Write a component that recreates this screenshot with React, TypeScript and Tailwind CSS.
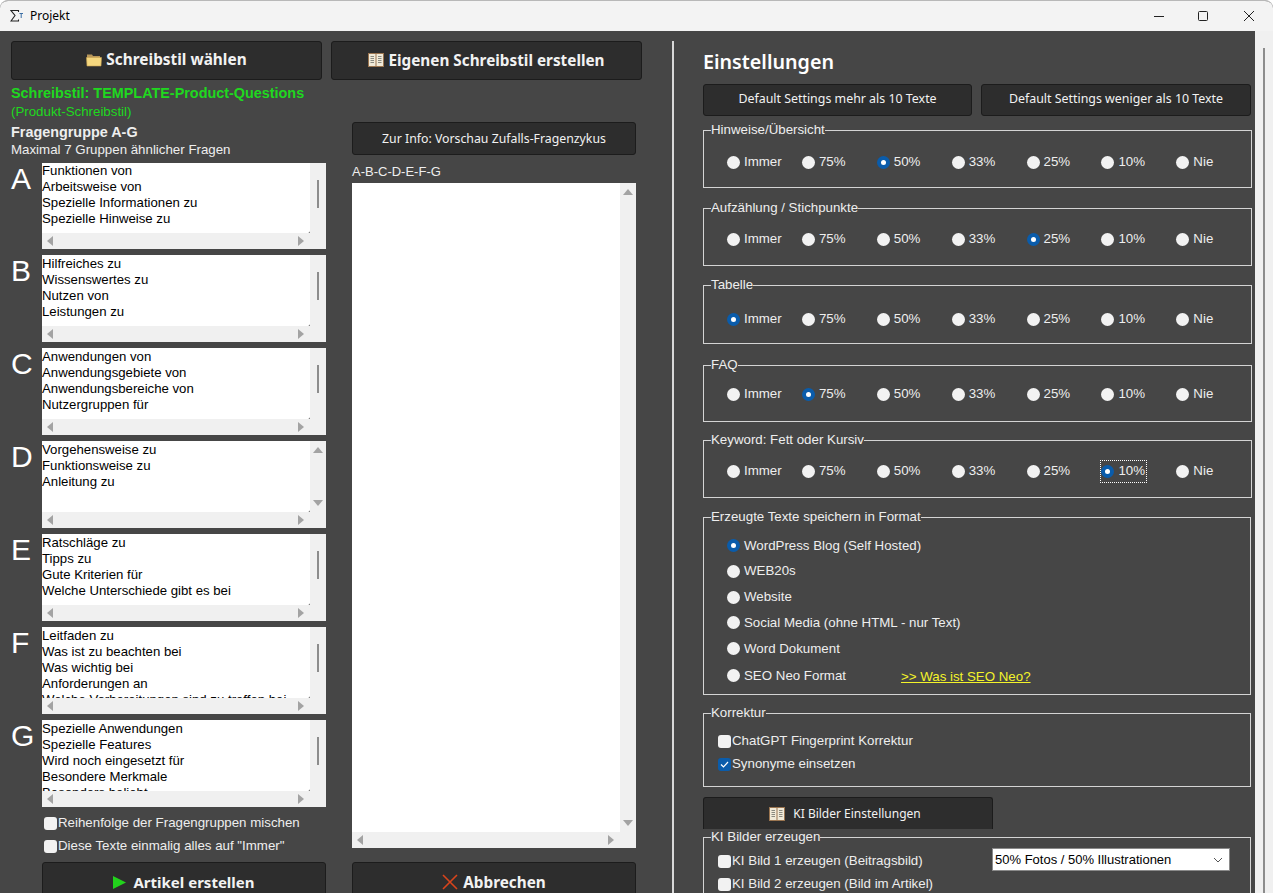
import type { ReactNode } from 'react';

const groups = [
  { letter: 'A', lines: ['Funktionen von', 'Arbeitsweise von', 'Spezielle Informationen zu', 'Spezielle Hinweise zu'], thumb: true, box: 'h-[86px]', text: 'pt-0' },
  { letter: 'B', lines: ['Hilfreiches zu', 'Wissenswertes zu', 'Nutzen von', 'Leistungen zu'], thumb: true, box: 'h-[87px]', text: 'pt-px' },
  { letter: 'C', lines: ['Anwendungen von', 'Anwendungsgebiete von', 'Anwendungsbereiche von', 'Nutzergruppen für'], thumb: true, box: 'h-[87px]', text: 'pt-px' },
  { letter: 'D', lines: ['Vorgehensweise zu', 'Funktionsweise zu', 'Anleitung zu'], thumb: false, box: 'h-[87px]', text: 'pt-px' },
  { letter: 'E', lines: ['Ratschläge zu', 'Tipps zu', 'Gute Kriterien für', 'Welche Unterschiede gibt es bei'], thumb: true, box: 'h-[87px]', text: 'pt-px' },
  { letter: 'F', lines: ['Leitfaden zu', 'Was ist zu beachten bei', 'Was wichtig bei', 'Anforderungen an', 'Welche Vorbereitungen sind zu treffen bei'], thumb: true, box: 'h-[87px]', text: 'pt-px' },
  { letter: 'G', lines: ['Spezielle Anwendungen', 'Spezielle Features', 'Wird noch eingesetzt für', 'Besondere Merkmale', 'Besonders beliebt'], thumb: true, box: 'h-[87px]', text: 'pt-px' },
];

const percents = ['Immer', '75%', '50%', '33%', '25%', '10%', 'Nie'];

const radioGroups = [
  { title: 'Hinweise/Übersicht', active: '50%', box: 'mt-[6px] h-[66px]', row: 'pt-[16px]' },
  { title: 'Aufzählung / Stichpunkte', active: '25%', box: 'mt-[12px] h-[66px]', row: 'pt-[15px]' },
  { title: 'Tabelle', active: 'Immer', box: 'mt-[11px] h-[67px]', row: 'pt-[18px]' },
  { title: 'FAQ', active: '75%', box: 'mt-[13px] h-[65px]', row: 'pt-[13px]' },
  { title: 'Keyword: Fett oder Kursiv', active: '10%', box: 'mt-[10px] h-[66px]', row: 'pt-[15px]' },
];

const formats = ['WordPress Blog (Self Hosted)', 'WEB20s', 'Website', 'Social Media (ohne HTML - nur Text)', 'Word Dokument', 'SEO Neo Format'];

function FolderIcon() {
  return (
    <svg width="16" height="14" viewBox="0 0 16 14">
      <path d="M1 3 L1 1.5 L6 1.5 L7 3 L14 3 L14 5 L1 5 Z" fill="#b8975a" />
      <path d="M0.5 4.5 L15.5 4.5 L15 13 L1 13 Z" fill="#f5d77e" stroke="#c9a350" strokeWidth="0.6" />
    </svg>
  );
}

function BookIcon() {
  return (
    <svg width="16" height="14" viewBox="0 0 16 14">
      <rect x="0.5" y="0.5" width="15" height="13" fill="#f1ead8" stroke="#9a7550" />
      <path d="M8 1 V13" stroke="#9a7550" />
      <path d="M2.5 3.5 H6 M2.5 5.5 H6 M2.5 7.5 H6 M2.5 9.5 H6 M10 3.5 H13.5 M10 5.5 H13.5 M10 7.5 H13.5 M10 9.5 H13.5" stroke="#8a8a80" />
    </svg>
  );
}

function SigmaIcon() {
  return (
    <svg width="14" height="14" viewBox="0 0 14 14" fill="none" stroke="#222">
      <path d="M8.5 3 V1.5 H1 L5 6.5 L1 12 H8.5 V10.5" strokeWidth="1.1" />
      <path d="M9.5 4.5 H13 M11.2 4.5 V9" stroke="#3a6ea5" strokeWidth="1" />
    </svg>
  );
}

function DarkButton({ children, className }: { children: ReactNode; className: string }) {
  return (
    <button className={`flex items-center justify-center rounded-[3px] border border-[#1c1c1c] bg-[#2d2d2d] text-[#f2f2f2] font-['Noto_Sans',sans-serif] ${className}`}>
      {children}
    </button>
  );
}

function Arrow({ dir }: { dir: 'up' | 'down' | 'left' | 'right' }) {
  const points = {
    up: '0,8 5,2 10,8',
    down: '0,2 5,8 10,2',
    left: '8,0 2,5 8,10',
    right: '2,0 8,5 2,10',
  }[dir];
  return (
    <svg width="10" height="10" viewBox="0 0 10 10">
      <polygon points={points} fill="#a3a3a3" />
    </svg>
  );
}

function HBar() {
  return (
    <div className="flex h-4 shrink-0 items-center justify-between bg-[#f0f0f0] pl-[3px] pr-[20px]">
      <Arrow dir="left" />
      <Arrow dir="right" />
    </div>
  );
}

function ListGroup({ letter, lines, thumb, box, text }: { letter: string; lines: string[]; thumb: boolean; box: string; text: string }) {
  return (
    <div className={`flex ${box}`}>
      <div className="w-[31px] text-[30px] leading-[32px] text-white">{letter}</div>
      <div className="flex w-[284px] flex-col">
        <div className="flex min-h-0 flex-1">
          <div className={`w-[268px] overflow-hidden rounded-br-[2px] bg-white text-[13.2px] leading-[16px] text-black whitespace-nowrap ${text}`}>
            {lines.map((line) => (
              <div key={line}>{line}</div>
            ))}
          </div>
          {thumb ? (
            <div className="w-4 bg-[#f0f0f0] pl-[7px] pt-[17px]">
              <div className="h-[28px] w-[2px] bg-[#8c8c8c]" />
            </div>
          ) : (
            <div className="flex w-4 flex-col items-center justify-between bg-[#f0f0f0] py-[4px]">
              <Arrow dir="up" />
              <Arrow dir="down" />
            </div>
          )}
        </div>
        <HBar />
      </div>
    </div>
  );
}

function Check({ label, checked }: { label: string; checked?: boolean }) {
  return (
    <div className="flex items-center">
      {checked ? (
        <span className="flex h-[13px] w-[13px] items-center justify-center rounded-[3px] bg-[#0a5cab]">
          <svg width="9" height="9" viewBox="0 0 9 9" fill="none" stroke="white" strokeWidth="1.2">
            <path d="M1 4.5 L3.5 7 L8 2" />
          </svg>
        </span>
      ) : (
        <span className="h-[13px] w-[13px] rounded-[3px] bg-[#f2f2f2]" />
      )}
      <span className="ml-[1px]">{label}</span>
    </div>
  );
}

function Radio({ on }: { on: boolean }) {
  return on ? (
    <span className="flex h-[13px] w-[13px] items-center justify-center rounded-full bg-[#0a5cab]">
      <span className="h-[5px] w-[5px] rounded-full bg-white" />
    </span>
  ) : (
    <span className="h-[13px] w-[13px] rounded-full bg-[#f2f2f2]" />
  );
}

function Group({ title, className, children }: { title: string; className: string; children: ReactNode }) {
  return (
    <fieldset className={`border border-[#d4d4d4] ${className}`}>
      <legend className="ml-[7px] leading-[16px]">{title}</legend>
      {children}
    </fieldset>
  );
}

function RadioRow({ active }: { active: string }) {
  return (
    <div className="flex pl-[23px]">
      {percents.map((p) => (
        <div key={p} className="relative flex w-[74.9px] items-center gap-[4px]">
          <Radio on={p === active} />
          <span>{p}</span>
          {p === active && p === '10%' && (
            <span className="absolute left-[-1px] top-[-3px] h-[23px] w-[47px] border border-dotted border-white" />
          )}
        </div>
      ))}
    </div>
  );
}

export default function App() {
  return (
    <div className="flex h-[893px] w-[1273px] flex-col overflow-hidden rounded-t-lg border-t border-[#b8b8b8] bg-[#464646] font-['Liberation_Sans',Arial,sans-serif] text-[13.3px] leading-[16px] text-[#eeeeee]">
      {/* Title bar */}
      <div className="flex h-[30px] shrink-0 items-center bg-[#f3f3f3] text-black">
        <div className="ml-[10px]">
          <SigmaIcon />
        </div>
        <span className="ml-[6px] font-['Noto_Sans',sans-serif] text-[12px]">Projekt</span>
        <div className="ml-auto flex items-center">
          <svg width="12" height="12" viewBox="0 0 12 12" stroke="#222" className="mr-[32px]">
            <path d="M1 6.5 H11" />
          </svg>
          <svg width="12" height="12" viewBox="0 0 12 12" fill="none" stroke="#222" className="mr-[34px]">
            <rect x="1.5" y="1.5" width="9" height="9" rx="1" />
          </svg>
          <svg width="12" height="12" viewBox="0 0 12 12" stroke="#222" className="mr-[18px]">
            <path d="M1 1 L11 11 M11 1 L1 11" />
          </svg>
        </div>
      </div>

      <div className="flex min-h-0 flex-1">
        {/* Left side */}
        <div className="ml-[11px] w-[631px] shrink-0 pt-[10px]">
          <div className="flex gap-[9px]">
            <DarkButton className="h-[39px] w-[311px] gap-[4px] pb-[2px] text-[15.4px] font-bold">
              <FolderIcon />
              Schreibstil wählen
            </DarkButton>
            <DarkButton className="h-[39px] w-[311px] gap-[4px] pb-[2px] text-[15.3px] font-bold">
              <BookIcon />
              Eigenen Schreibstil erstellen
            </DarkButton>
          </div>

          <div className="flex">
            <div className="w-[315px]">
              <div className="mt-[4px] text-[14.4px] leading-[18px] font-bold text-[#1fd81f]">Schreibstil: TEMPLATE-Product-Questions</div>
              <div className="mt-[1px] leading-[18px] text-[#1fd81f]">(Produkt-Schreibstil)</div>
              <div className="mt-[2px] text-[14.4px] leading-[18px] font-bold">Fragengruppe A-G</div>
              <div className="mb-[4px] leading-[18px]">Maximal 7 Gruppen ähnlicher Fragen</div>
              <div className="flex flex-col gap-[6px]">
                {groups.map((g) => (
                  <ListGroup key={g.letter} letter={g.letter} lines={g.lines} thumb={g.thumb} box={g.box} text={g.text} />
                ))}
              </div>
              <div className="ml-[33px] mt-[8px] flex flex-col gap-[7px]">
                <Check label="Reihenfolge der Fragengruppen mischen" />
                <Check label={'Diese Texte einmalig alles auf "Immer"'} />
              </div>
              <DarkButton className="ml-[31px] mt-[8px] h-[40px] w-[284px] gap-[7px] text-[15px] font-bold">
                <svg width="13" height="13" viewBox="0 0 13 13">
                  <polygon points="0,0 13,6.5 0,13" fill="#22d31c" />
                </svg>
                Artikel erstellen
              </DarkButton>
            </div>

            <div className="ml-[26px] w-[284px]">
              <DarkButton className="mt-[42px] h-[33px] w-[284px] text-[12.3px]">Zur Info: Vorschau Zufalls-Fragenzykus</DarkButton>
              <div className="mb-[3px] mt-[9px] text-[13px] leading-[16px]">A-B-C-D-E-F-G</div>
              <div className="flex h-[665px] w-[284px] flex-col">
                <div className="flex min-h-0 flex-1">
                  <div className="w-[268px] bg-white" />
                  <div className="flex w-4 flex-col items-center justify-between bg-[#f0f0f0] py-[4px]">
                    <Arrow dir="up" />
                    <Arrow dir="down" />
                  </div>
                </div>
                <HBar />
              </div>
              <DarkButton className="mt-[14px] h-[40px] w-[284px] gap-[5px] text-[15.3px] font-bold">
                <svg width="16" height="16" viewBox="0 0 16 16" stroke="#d8441c" strokeWidth="1.6">
                  <path d="M1 1 L15 15 M15 1 L1 15" />
                </svg>
                Abbrechen
              </DarkButton>
            </div>
          </div>
        </div>

        {/* Divider */}
        <div className="ml-[30px] mt-[10px] w-[2px] shrink-0 bg-[#d8d8d8]" />

        {/* Settings */}
        <div className="ml-[29px] w-[548px] shrink-0">
          <h1 className="mt-[17px] font-['Noto_Sans',sans-serif] text-[19.7px] leading-[28px] font-semibold text-white">Einstellungen</h1>
          <div className="mt-[8px] flex justify-between">
            <DarkButton className="h-[32px] w-[269px] pb-[2px] text-[12.4px]">Default Settings mehr als 10 Texte</DarkButton>
            <DarkButton className="h-[32px] w-[270px] pb-[2px] text-[12.4px]">Default Settings weniger als 10 Texte</DarkButton>
          </div>

          {radioGroups.map((g) => (
            <Group key={g.title} title={g.title} className={g.box}>
              <div className={g.row}>
                <RadioRow active={g.active} />
              </div>
            </Group>
          ))}

          <Group title="Erzeugte Texte speichern in Format" className="mt-[11px] h-[186px]">
            <div className="flex flex-col gap-[9.8px] pl-[23px] pt-[12.5px]">
              {formats.map((f, i) => (
                <div key={f} className="flex items-center gap-[4px]">
                  <Radio on={i === 0} />
                  <span>{f}</span>
                  {i === 5 && <span className="ml-[51px] mt-[3px] text-[#f4f42a] underline">{'>> Was ist SEO Neo?'}</span>}
                </div>
              ))}
            </div>
          </Group>

          <Group title="Korrektur" className="mt-[10px] h-[82px]">
            <div className="flex flex-col gap-[7px] pl-[14px] pt-[12px]">
              <Check label="ChatGPT Fingerprint Korrektur" />
              <Check label="Synonyme einsetzen" checked />
            </div>
          </Group>

          <button className="mt-[10px] flex h-[32px] w-[290px] items-center justify-center gap-[8px] rounded-t-[3px] border border-b-0 border-[#1c1c1c] bg-[#2d2d2d] pr-[6px] font-['Noto_Sans',sans-serif] text-[12px] text-[#f2f2f2]">
            <BookIcon />
            KI Bilder Einstellungen
          </button>

          <Group title="KI Bilder erzeugen" className="h-[120px]">
            <div className="relative pl-[14px] pt-[8px]">
              <div className="flex flex-col gap-[7px]">
                <Check label="KI Bild 1 erzeugen (Beitragsbild)" />
                <Check label="KI Bild 2 erzeugen (Bild im Artikel)" />
              </div>
              <div className="absolute left-[288px] top-[3px] flex h-[23px] w-[238px] items-center justify-between border border-[#8a8a8a] bg-white pl-[2px] pr-[6px] text-[13px] text-black">
                50% Fotos / 50% Illustrationen
                <svg width="10" height="6" viewBox="0 0 10 6" fill="none" stroke="#555">
                  <path d="M1 1 L5 5 L9 1" />
                </svg>
              </div>
            </div>
          </Group>
        </div>

        {/* Window scrollbar */}
        <div className="ml-auto w-[18px] shrink-0 bg-[#f0f0f0] pl-[8px] pt-[17px]">
          <div className="h-full w-[2px] bg-[#8c8c8c]" />
        </div>
      </div>
    </div>
  );
}
